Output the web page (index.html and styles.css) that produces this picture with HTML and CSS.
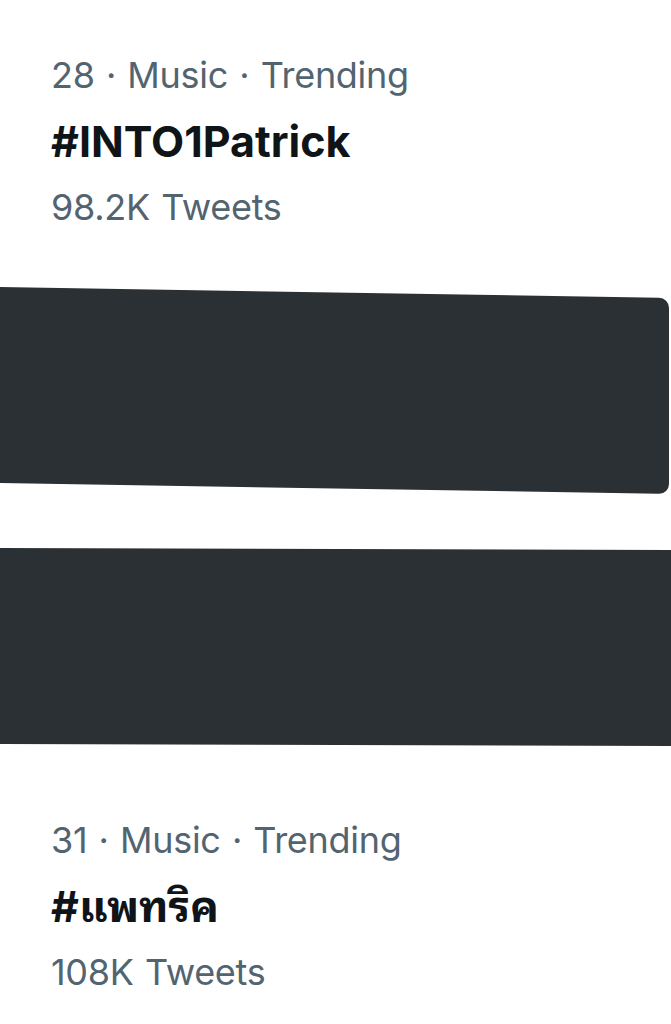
FILE: index.html
```html
<!DOCTYPE html>
<html lang="en">
<head>
<meta charset="utf-8">
<title>Trends</title>
<link rel="stylesheet" href="styles.css">
</head>
<body>
<main class="page">
  <section class="trend trend-first">
    <div class="meta">28 · Music · Trending</div>
    <div class="tag">#INTO1Patrick</div>
    <div class="meta">98.2K Tweets</div>
  </section>
  <div class="redact redact-one"></div>
  <div class="redact redact-two"></div>
  <section class="trend trend-last">
    <div class="meta">31 · Music · Trending</div>
    <div class="tag tag-thai">#แพทริค</div>
    <div class="meta">108K Tweets</div>
  </section>
</main>
</body>
</html>
```
FILE: styles.css
```css
html, body {
  margin: 0;
  padding: 0;
  background: #ffffff;
}
.page {
  width: 671px;
  height: 1024px;
  overflow: hidden;
  font-family: Inter, "Noto Sans", "Noto Sans Thai", "DejaVu Sans", sans-serif;
}
.trend {
  padding-left: 51px;
}
.trend-first {
  padding-top: 42px;
}
.trend-last {
  margin-top: 63px;
}
.meta, .tag {
  line-height: 66px;
  height: 66px;
  white-space: nowrap;
}
.meta {
  font-size: 36px;
  color: #536471;
  font-weight: 400;
  letter-spacing: -0.3px;
  word-spacing: 1.5px;
}
.tag {
  font-size: 43px;
  line-height: 62px;
  padding-top: 2px;
  height: 64px;
  color: #0f1419;
  font-weight: 700;
  letter-spacing: 0;
}
.tag-thai {
  font-family: Inter, "Noto Sans Thai Looped", "Noto Serif Thai", "Noto Sans Thai", "DejaVu Sans", sans-serif;
}
.redact {
  background: #2b3034;
  height: 196px;
  transform-origin: 0 0;
}
.redact-one {
  margin-top: 47px;
  width: 669px;
  border-radius: 0 10px 10px 0;
  transform: skewY(0.94deg);
}
.redact-two {
  margin-top: 65px;
  width: 671px;
  transform: skewY(0.17deg);
}
```
